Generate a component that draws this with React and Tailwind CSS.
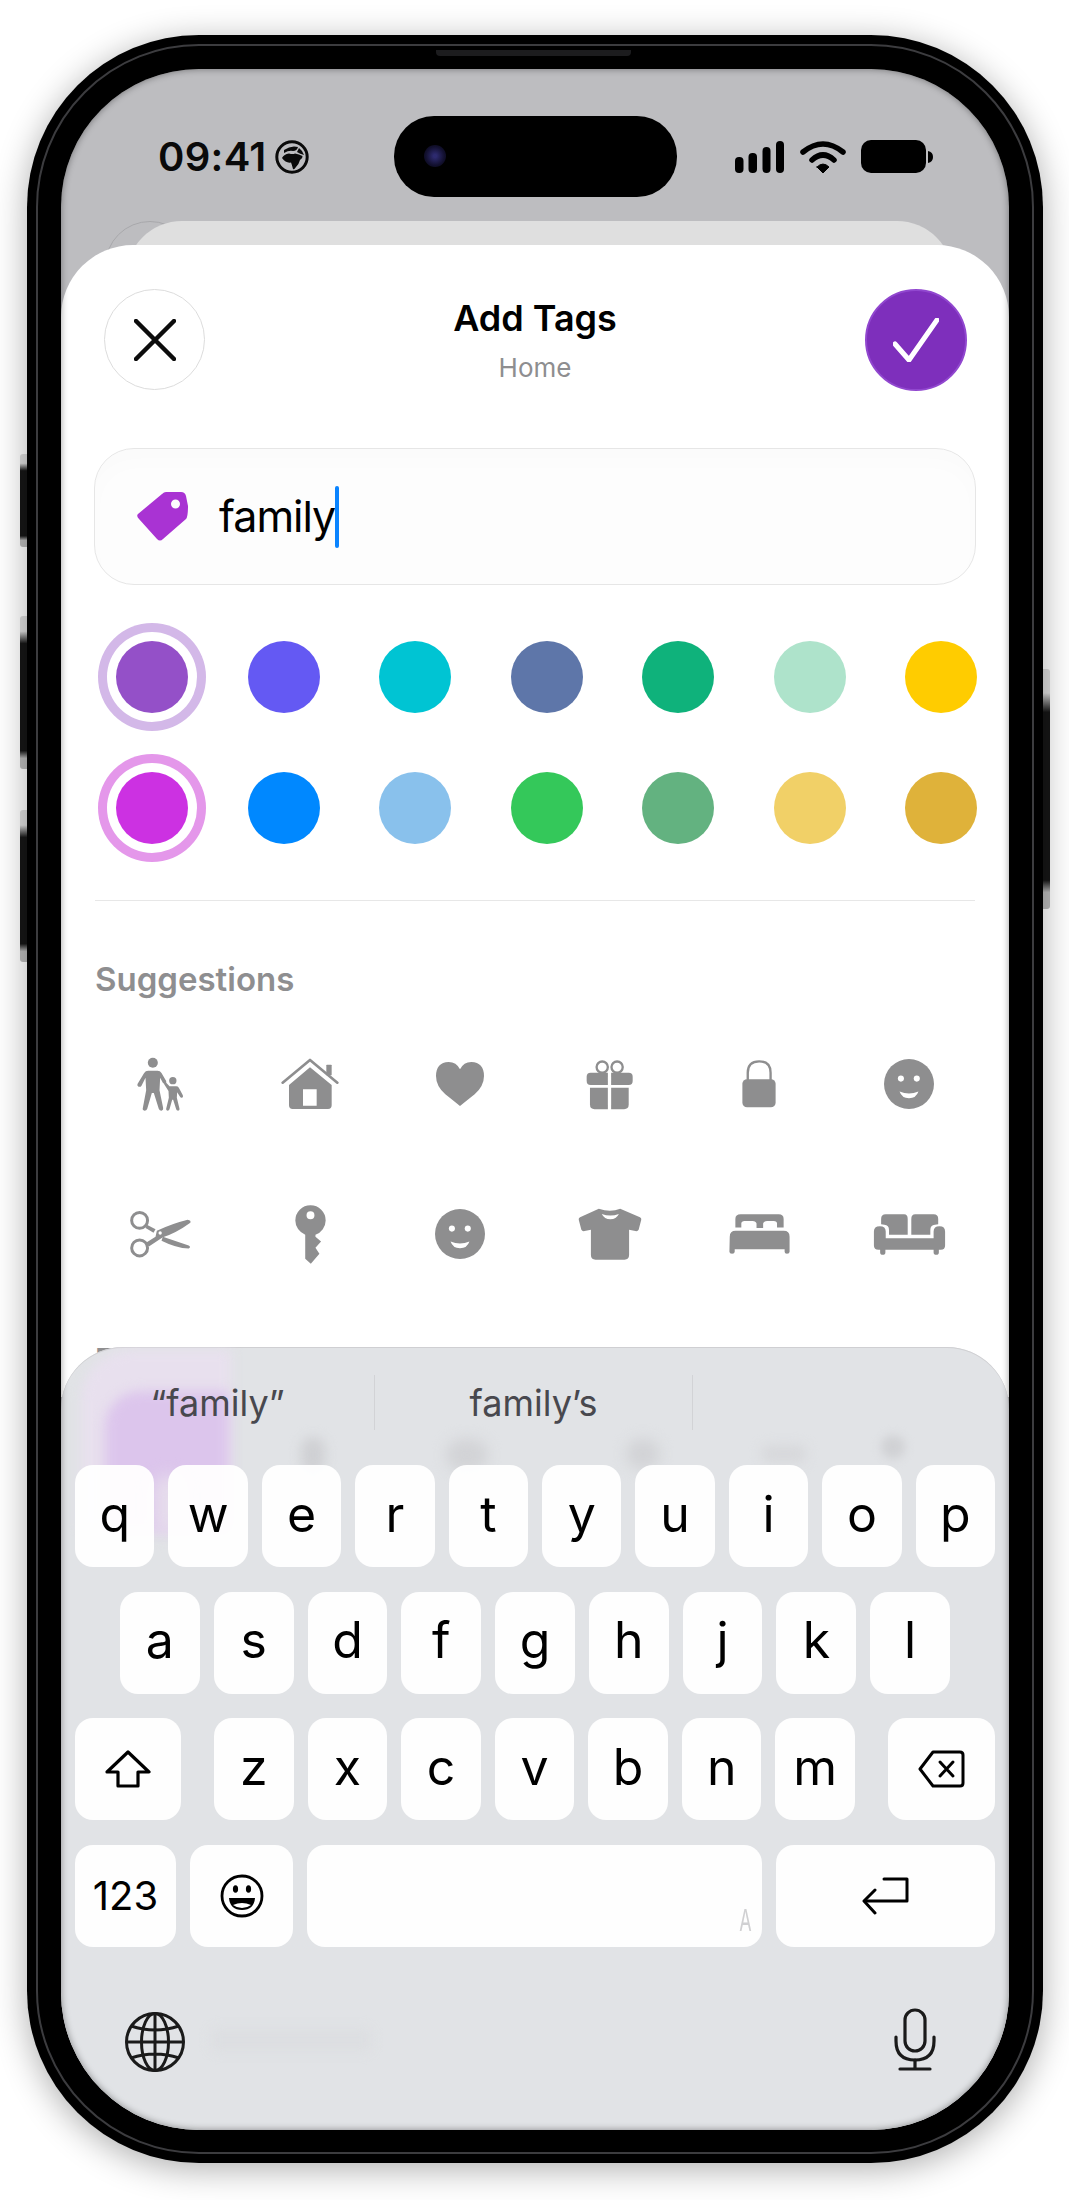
import React from 'react';

const DOT_ROWS = [
    { selected: 'shadow-[0_0_0_9px_#ffffff,0_0_0_18px_#d3b8e8]', colors: ['bg-[#9450c8]', 'bg-[#6459f3]', 'bg-[#00c4d3]', 'bg-[#5e76a9]', 'bg-[#0fb27b]', 'bg-[#aee3cb]', 'bg-[#ffcc00]'] },
    { selected: 'shadow-[0_0_0_9px_#ffffff,0_0_0_18px_#e497ea]', colors: ['bg-[#cc31e2]', 'bg-[#0088ff]', 'bg-[#89c1ec]', 'bg-[#34c85a]', 'bg-[#63b280]', 'bg-[#f1d067]', 'bg-[#dfb23a]'] },
];

const GRAY = '#8e8e8f';

const PersonIcon = () => (
    <svg width="49" height="54" viewBox="50 50 146 162" fill={GRAY}>
        <circle cx="100" cy="67" r="15" />
        <path d="M86 91L114 91Q122 91 126 98L140 122Q142 128 137 130Q133 131 130 127L122 112L120 150L131 203Q132 210 126 211Q120 211 118 206L103 158L97 158L83 206Q81 211 75 211Q68 210 70 203L80 150L78 112L66 136Q63 141 57 139Q52 136 54 131L74 98Q78 91 86 91Z" />
        <circle cx="160" cy="121" r="11" />
        <path d="M150 138L170 138Q175 138 178 142L190 165Q192 170 188 172Q184 173 182 170L173 156L172 172L180 205Q181 210 176 211Q171 211 170 207L161 178L158 178L150 207Q149 211 144 211Q139 210 140 205L148 172L147 152L134 132Q132 128 136 126Q139 125 141 128Z" />
    </svg>
);

const HomeIcon = () => (
    <svg width="58" height="52" viewBox="484 56 172 156" fill={GRAY}>
        <path d="M488 130L570 62L652 130" fill="none" stroke={GRAY} strokeWidth="8" strokeLinecap="round" strokeLinejoin="round" />
        <rect x="619" y="76" width="16" height="32" rx="2" />
        <path fillRule="evenodd" d="M570 84L635 137V198Q635 209 624 209H518Q507 209 507 198V137ZM549 150V199H590V150Z" />
    </svg>
);

const HeartIcon = () => (
    <svg width="48" height="44" viewBox="947 68 144 132" fill={GRAY}>
        <path d="M1019 200Q1000 185 975 165Q947 140 947 110Q947 70 985 68Q1008 68 1019 90Q1030 68 1053 68Q1091 70 1091 110Q1091 140 1063 165Q1038 185 1019 200Z" />
    </svg>
);

const GiftIcon = () => (
    <svg width="47" height="51" viewBox="76 58 142 153" fill={GRAY}>
        <circle cx="125" cy="82" r="17" fill="none" stroke={GRAY} strokeWidth="7" />
        <circle cx="170" cy="82" r="17" fill="none" stroke={GRAY} strokeWidth="7" />
        <path d="M90 99H142V136H90Q78 136 78 124V111Q78 99 90 99Z" />
        <path d="M152 99H205Q217 99 217 111V124Q217 136 205 136H152Z" />
        <path d="M88 144H142V209H102Q88 209 88 195Z" />
        <path d="M152 144H205V195Q205 209 191 209H152Z" />
    </svg>
);

const LockIcon = () => (
    <svg width="34" height="48" viewBox="546 64 101 143" fill={GRAY}>
        <path d="M563 124V102Q563 68 597 68Q631 68 631 102V124" fill="none" stroke={GRAY} strokeWidth="7" />
        <rect x="547" y="121" width="99" height="84" rx="14" />
    </svg>
);

const SmileIcon = () => (
    <svg width="50" height="50" viewBox="0 0 148 148" fill={GRAY}>
        <circle cx="74" cy="74" r="74" />
        <circle cx="50" cy="58" r="9" fill="#fff" />
        <circle cx="97" cy="58" r="9" fill="#fff" />
        <path d="M46 96Q74 108 102 96Q95 116 74 116Q53 116 46 96Z" fill="#fff" />
    </svg>
);

const ScissorsIcon = () => (
    <svg width="63" height="48" viewBox="28 56 190 144" fill={GRAY}>
        <circle cx="60" cy="87" r="24" fill="none" stroke={GRAY} strokeWidth="9" />
        <circle cx="60" cy="170" r="24" fill="none" stroke={GRAY} strokeWidth="9" />
        <path d="M82 100L108 114L102 124L78 110Z" />
        <path d="M130 136L208 163Q216 168 208 172Q170 170 126 148Z" />
        <path d="M78 155L108 136L112 118Q160 96 205 85Q216 87 213 94Q170 125 130 138L88 166Z" />
        <circle cx="122" cy="125" r="5" fill="#fff" />
    </svg>
);

const KeyIcon = () => (
    <svg width="31" height="60" viewBox="524 40 94 180" fill={GRAY}>
        <path fillRule="evenodd" d="M525 89A46 46 0 1 1 617 89A46 46 0 0 1 586 132V138L603 153L586 172L598 190L572 220L555 205V132A46 46 0 0 1 525 89ZM559 73A12 12 0 1 0 583 73A12 12 0 0 0 559 73Z" />
    </svg>
);

const ShirtIcon = () => (
    <svg width="64" height="52" viewBox="52 52 194 158" fill={GRAY}>
        <path fillRule="evenodd" d="M115 54Q150 66 180 54L240 80Q245 82 244 88L236 118Q233 124 226 122L207 118V195Q207 209 193 209H105Q91 209 91 195V118L72 122Q65 124 62 118L54 88Q53 82 58 80ZM124 70Q132 86 150 86Q168 86 176 70Q150 80 124 70Z" />
    </svg>
);

const BedIcon = () => (
    <svg width="61" height="40" viewBox="505 71 184 121" fill={GRAY}>
        <path d="M524 112V86Q524 72 540 72H655Q670 72 670 86V112L650 112V100Q650 92 640 92H620Q610 92 608 100V113H588V100Q586 92 576 92H552Q542 92 542 100V112Z" />
        <path d="M507 140Q507 122 525 122H670Q688 122 688 140V185Q688 191 680 191Q673 191 673 185V178H522V185Q522 191 514 191Q506 191 506 185Z" />
    </svg>
);

const SofaIcon = () => (
    <svg width="73" height="41" viewBox="935 69 219 125" fill={GRAY}>
        <path d="M958 100V84Q958 70 972 70H1028Q1039 70 1039 84V132H982V118Q982 103 968 102Z" />
        <path d="M1132 100V84Q1132 70 1118 70H1062Q1050 70 1050 84V132H1108V118Q1108 103 1122 102Z" />
        <path d="M936 122Q936 106 954 106Q972 106 972 122V143H1118V122Q1118 106 1136 106Q1153 106 1153 122V165Q1153 178 1140 178H1134V186Q1134 193 1126 193Q1118 193 1118 186V178H971V186Q971 193 963 193Q955 193 955 186V178H950Q936 178 936 165Z" />
    </svg>
);

const SUGGESTIONS = [PersonIcon, HomeIcon, HeartIcon, GiftIcon, LockIcon, SmileIcon, ScissorsIcon, KeyIcon, SmileIcon, ShirtIcon, BedIcon, SofaIcon];

const EarthIcon = () => (
    <svg width="34" height="34" viewBox="0 0 34 34" fill="#0a0a0a">
        <circle cx="17" cy="17" r="15.2" fill="none" stroke="#0a0a0a" strokeWidth="3" />
        <path d="M9 10Q16 5 23 7Q22 11 18 11Q14 10 9 13Z" />
        <path d="M24 8Q28 11 29 15Q25 14 22 12Z" />
        <path d="M7 18Q9 14 14 13.5Q18 14.5 20 13.5Q24 14 27.5 16Q28 18 25 20Q24 24 21 27Q19 30 18 29Q17 25 16 22.5Q11 23.5 7 18Z" />
    </svg>
);

const SignalIcon = () => (
    <svg width="50" height="33" viewBox="0 0 50 33" fill="#000">
        <rect x="0" y="17" width="8.5" height="16" rx="4" />
        <rect x="13.5" y="13" width="8.5" height="20" rx="4" />
        <rect x="27.5" y="7" width="8" height="26" rx="4" />
        <rect x="41" y="1" width="8" height="32" rx="4" />
    </svg>
);

const WifiIcon = () => (
    <svg width="46" height="34" viewBox="0 0 46 34" fill="none" stroke="#000" strokeWidth="5.5" strokeLinecap="round">
        <path d="M3 12Q23 -4 43 12" />
        <path d="M12 20Q23 10 34 20" />
        <path d="M17 27L23 33L29 27Q23 21 17 27Z" fill="#000" strokeWidth="1" strokeLinejoin="round" />
    </svg>
);

const BatteryIcon = () => (
    <svg width="72" height="33" viewBox="0 0 72 33" fill="#000">
        <rect x="0" y="0" width="65" height="33" rx="10" />
        <path d="M67 11Q72 12 72 17Q72 22 67 23Z" />
    </svg>
);

const ShiftIcon = () => (
    <svg width="46" height="38" viewBox="0 0 46 38" fill="none" stroke="#000" strokeWidth="3.2" strokeLinejoin="round">
        <path d="M23 2L44 22H33V36H13V22H2Z" />
    </svg>
);

const BackspaceIcon = () => (
    <svg width="47" height="38" viewBox="0 0 47 38" fill="none" stroke="#000" strokeWidth="3" strokeLinejoin="round" strokeLinecap="round">
        <path d="M15 2H42Q45 2 45 5V33Q45 36 42 36H15L2 19Z" />
        <path d="M22 12L35 26M35 12L22 26" />
    </svg>
);

const EmojiIcon = () => (
    <svg width="44" height="44" viewBox="0 0 44 44" fill="none" stroke="#000" strokeWidth="2.8">
        <circle cx="22" cy="22" r="20" />
        <ellipse cx="15.5" cy="15" rx="2.6" ry="3.8" fill="#000" stroke="none" />
        <ellipse cx="28.5" cy="15" rx="2.6" ry="3.8" fill="#000" stroke="none" />
        <path d="M9 24H35Q34 36 22 36Q10 36 9 24Z" fill="#000" stroke="none" />
        <path d="M13 31Q22 27 31 31Q27 34 22 34Q17 34 13 31Z" fill="#fff" stroke="none" />
    </svg>
);

const ReturnIcon = () => (
    <svg width="47" height="38" viewBox="0 0 47 38" fill="none" stroke="#000" strokeWidth="3" strokeLinecap="round" strokeLinejoin="round">
        <path d="M22 2H45V24H3" />
        <path d="M13 13L2 24L13 36" />
    </svg>
);

const GlobeIcon = () => (
    <svg width="60" height="60" viewBox="0 0 60 60" fill="none" stroke="#1a1a1a" strokeWidth="3">
        <circle cx="30" cy="30" r="28.5" />
        <ellipse cx="30" cy="30" rx="13.5" ry="28.5" />
        <path d="M30 1.5V58.5M1.5 30H58.5M6 14Q30 22 54 14M6 46Q30 38 54 46" />
    </svg>
);

const MicIcon = () => (
    <svg width="42" height="63" viewBox="0 0 42 63" fill="none" stroke="#1a1a1a" strokeWidth="3.2" strokeLinecap="round">
        <rect x="11" y="2" width="20" height="41" rx="10" />
        <path d="M2 29V33Q2 52 21 52Q40 52 40 33V29" />
        <path d="M21 52V61M6 61H36" />
    </svg>
);

const Key = ({ children, className = '' }) => (
    <div className={`h-[102px] rounded-[18px] bg-white/95 flex items-center justify-center text-[50px] text-black ${className}`}>
        {children}
    </div>
);

const LetterRow = ({ letters, className = '' }) => (
    <div className={`flex gap-[14px] ${className}`}>
        {letters.split('').map((l) => (
            <Key key={l} className="flex-1 pb-[4px]">{l}</Key>
        ))}
    </div>
);

const SIDE_BUTTON = 'absolute h-[153px] w-[8px] bg-[linear-gradient(#dcdcdc_0%,#dcdcdc_10%,#161616_18%,#161616_88%,#bbbbbb_93%,#bbbbbb_100%)]';

const App = () => {
    return (
        <div className="relative min-h-[2200px] bg-white pt-[35px] pl-[27px] font-['Inter',sans-serif]">
            {/* side buttons */}
            <div className={`${SIDE_BUTTON} left-[20px] top-[454px] !h-[93px] rounded-l-[3px]`} />
            <div className={`${SIDE_BUTTON} left-[20px] top-[616px] rounded-l-[3px]`} />
            <div className={`${SIDE_BUTTON} left-[20px] top-[810px] !h-[152px] rounded-l-[3px]`} />
            <div className={`${SIDE_BUTTON} left-[1042px] top-[669px] !h-[240px] rounded-r-[3px]`} />

            <div className="relative h-[2128px] w-[1016px] rounded-[172px] bg-black pt-[34px] pb-[33px] pl-[34px] pr-[34px] shadow-[0_6px_34px_rgba(0,0,0,0.32)]">
                <div className="pointer-events-none absolute inset-[9px] rounded-[163px] border-2 border-[#3c3c3f]" />
                <div className="absolute left-[409px] top-[15px] h-[6px] w-[195px] rounded-b-[4px] bg-[#1c1c1e]" />

                <div className="relative h-full overflow-hidden rounded-[138px] bg-[#bdbdc0]">
                    {/* status bar */}
                    <div className="flex h-[152px] items-start pt-[47px] pl-[97px]">
                        <div className="flex h-[81px] w-[151px] items-center justify-between">
                            <span className="text-[40px] font-semibold leading-none tracking-[0.3px] text-[#0a0a0a]">09:41</span>
                            <EarthIcon />
                        </div>
                        <div className="relative ml-[85px] h-[81px] w-[283px] rounded-[40px] bg-black">
                            <div className="absolute left-[30px] top-[29px] h-[22px] w-[22px] rounded-full bg-[radial-gradient(circle,#2d2a6e_10%,#12102e_60%,#050510_100%)]" />
                        </div>
                        <div className="ml-[58px] flex h-[81px] w-[198px] items-center justify-between">
                            <SignalIcon />
                            <WifiIcon />
                            <BatteryIcon />
                        </div>
                    </div>

                    {/* sheet behind */}
                    <div className="absolute left-[44px] top-[152px] h-[90px] w-[90px] rounded-full border border-[#a8a8ab]" />
                    <div className="relative ml-[65px] mr-[56px] -mb-[56px] h-[80px] rounded-t-[56px] bg-[#dfdfdf]" />

                    {/* sheet */}
                    <div className="relative h-[1152px] overflow-hidden rounded-t-[72px] bg-white">
                        <div className="flex items-start justify-between pt-[44px] pl-[43px] pr-[42px]">
                            <div className="flex h-[101px] w-[101px] items-center justify-center rounded-full border border-[#dcdcdc] bg-white">
                                <svg width="42" height="42" viewBox="0 0 42 42" fill="none" stroke="#0c0c0c" strokeWidth="4.5" strokeLinecap="round">
                                    <path d="M2 2L40 40M40 2L2 40" />
                                </svg>
                            </div>
                            <div className="flex flex-col items-center pt-[7px]">
                                <span className="text-[36px] font-semibold leading-[44px] text-black">Add Tags</span>
                                <span className="mt-[13px] text-[26px] leading-[30px] text-[#8e8e90]">Home</span>
                            </div>
                            <div className="flex h-[102px] w-[102px] items-center justify-center rounded-full border-2 border-[#9147cf] bg-[#7e2fbc]">
                                <svg width="46" height="44" viewBox="0 0 46 44" fill="none" stroke="#fff" strokeWidth="5" strokeLinecap="round" strokeLinejoin="round">
                                    <path d="M2 26L16 42L44 2" />
                                </svg>
                            </div>
                        </div>

                        <div className="mx-[33px] mt-[57px] flex h-[137px] items-center rounded-[40px] border border-[#e6e6e6] bg-[#fdfdfd] pl-[42px] shadow-[inset_0_14px_22px_rgba(0,0,0,0.012)]">
                            <svg width="51" height="49" viewBox="0 0 51 49" fill="#a933d3">
                                <path fillRule="evenodd" d="M1 22L25 2Q27 0 29 0H44Q48 0 49 4L51 14Q51 25 49 27L26 47Q23 50 20 47L2 27Q-1 24 1 22ZM34 12A4.5 4.5 0 1 0 43 12A4.5 4.5 0 0 0 34 12Z" />
                            </svg>
                            <span className="ml-[31px] text-[43px] leading-none tracking-[-1px] text-black">family</span>
                            <span className="h-[62px] w-[4px] rounded-full bg-[#0a84ff]" />
                        </div>

                        <div className="mt-[56px] flex flex-col gap-[59px] pl-[55px]">
                            {DOT_ROWS.map((row) => (
                                <div key={row.selected} className="flex gap-[59.5px]">
                                    {row.colors.map((c, i) => (
                                        <div key={c} className={`h-[72px] w-[72px] rounded-full ${c} ${i === 0 ? row.selected : ''}`} />
                                    ))}
                                </div>
                            ))}
                        </div>

                        <div className="mx-[34px] mt-[56px] h-px bg-[#e7e7e7]" />

                        <div className="mt-[59px] pl-[34px] text-[33px] font-semibold leading-[38px] text-[#8e8e90]">Suggestions</div>

                        <div className="ml-[25px] mt-[11px] grid w-[898px] grid-cols-6">
                            {SUGGESTIONS.map((Icon, i) => (
                                <div key={i} className="flex h-[150px] items-center justify-center">
                                    <Icon />
                                </div>
                            ))}
                        </div>

                        <div className="mt-[32px] pl-[34px] text-[31px] font-semibold leading-[38px] text-[#8e8e90]">Favourites</div>
                    </div>

                    {/* keyboard */}
                    <div className="relative -mt-[50px] h-[783px] overflow-hidden rounded-t-[62px] bg-[#e1e3e6] shadow-[inset_0_1px_0_#cfcfd2]">
                        {/* blurred content behind the keyboard */}
                        <div className="absolute left-[20px] top-[3px] h-[180px] w-[150px] rounded-tl-[50px] bg-[#e8e0ee] blur-[6px]" />
                        <div className="absolute left-[44px] top-[44px] h-[140px] w-[124px] rounded-tl-[36px] bg-[#dcc5ec] blur-[6px]" />
                        <div className="absolute left-[92px] top-[128px] h-[60px] w-[30px] rounded-full bg-[#e6dcec] blur-[8px]" />
                        <div className="absolute left-[240px] top-[90px] h-[36px] w-[24px] rounded-full bg-[#cfd0d3] blur-[6px]" />
                        <div className="absolute left-[385px] top-[92px] h-[32px] w-[42px] rounded-full bg-[#d2d3d6] blur-[7px]" />
                        <div className="absolute left-[565px] top-[92px] h-[30px] w-[34px] rounded-full bg-[#d2d3d6] blur-[7px]" />
                        <div className="absolute left-[700px] top-[98px] h-[18px] w-[46px] rounded-full bg-[#d7d8db] blur-[6px]" />
                        <div className="absolute left-[820px] top-[88px] h-[24px] w-[24px] rounded-full bg-[#d0d1d4] blur-[5px]" />
                        <div className="absolute left-[150px] top-[682px] h-[22px] w-[160px] rounded bg-[#dcdee1] blur-[6px]" />

                        <div className="relative flex h-[83px] items-start pt-[28px]">
                            <div className="flex h-[55px] w-[314px] items-center justify-center border-r border-[#d2d3d6] text-[36px] leading-none text-[#48484e]">“family”</div>
                            <div className="flex h-[55px] w-[318px] items-center justify-center border-r border-[#d2d3d6] text-[36px] leading-none text-[#48484e]">family’s</div>
                        </div>

                        <div className="relative mt-[35px] flex flex-col gap-[24.6px]">
                            <LetterRow letters="qwertyuiop" className="px-[14px]" />
                            <LetterRow letters="asdfghjkl" className="px-[59px]" />
                            <div className="flex px-[14px]">
                                <Key className="w-[106px]"><ShiftIcon /></Key>
                                <div className="mx-[33px] flex flex-1 gap-[14px]">
                                    {'zxcvbnm'.split('').map((l) => (
                                        <Key key={l} className="flex-1 pb-[4px]">{l}</Key>
                                    ))}
                                </div>
                                <Key className="w-[107px]"><BackspaceIcon /></Key>
                            </div>
                            <div className="flex gap-[14px] px-[14px]">
                                <Key className="w-[101px] !text-[40px]">123</Key>
                                <Key className="w-[103px]"><EmojiIcon /></Key>
                                <Key className="relative flex-1">
                                    <span className="absolute bottom-[12px] right-[10px] origin-bottom-right scale-x-[0.6] text-[30px] leading-none text-[#d0d0d2]">A</span>
                                </Key>
                                <Key className="w-[219px]"><ReturnIcon /></Key>
                            </div>
                        </div>

                        <div className="relative mt-[61px] flex items-start justify-between pl-[64px] pr-[73px]">
                            <div className="mt-[4px]"><GlobeIcon /></div>
                            <MicIcon />
                        </div>
                    </div>

                    {/* edge shading of the screen */}
                    <div className="pointer-events-none absolute inset-0 rounded-[138px] shadow-[inset_0_0_7px_rgba(0,0,0,0.4)]" />
                </div>
            </div>
        </div>
    );
};

export default App;
